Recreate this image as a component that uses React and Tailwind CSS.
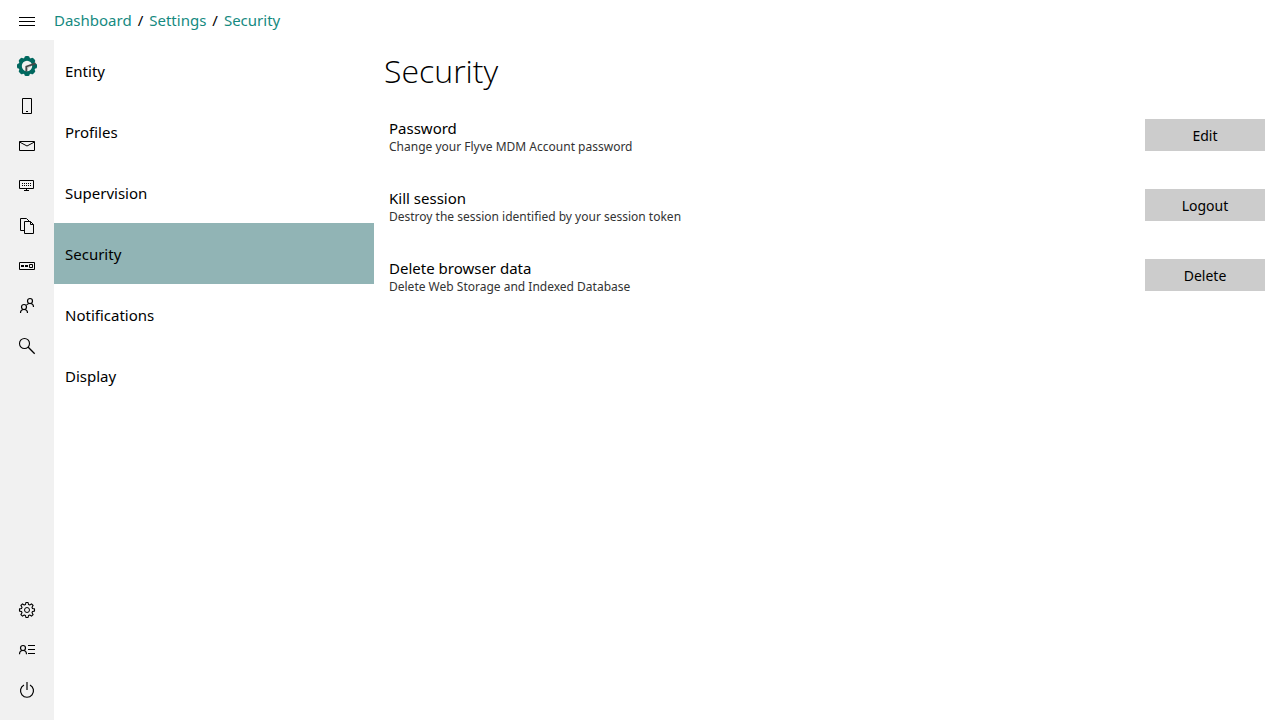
const TEETH = [0, 45, 90, 135, 180, 225, 270, 315];

const outline = { fill: 'none', stroke: 'currentColor', strokeWidth: 1 };

function Icon({ children }) {
  return (
    <svg viewBox="0 0 20 20" className="size-5" aria-hidden="true" {...outline}>
      {children}
    </svg>
  );
}

const icons = {
  menu: (
    <Icon>
      <path d="M2 7.5h16M2 11.5h16M2 15.5h16" />
    </Icon>
  ),
  logo: (
    <Icon>
      <g fill="#00685f" stroke="none">
        {TEETH.map((a) => (
          <rect key={a} x="7.4" y="0" width="5.2" height="4" rx="1.6" transform={`rotate(${a} 10 10)`} />
        ))}
      </g>
      <circle cx="10" cy="10" r="6.9" stroke="#00685f" strokeWidth="3.4" />
      <path d="M9.3 15.4V10.6L18.6 7.4" stroke="#474747" strokeWidth="1.8" />
      <path d="M10.6 14.6v-3.2l3-1" stroke="#aaa" strokeWidth="0.8" />
    </Icon>
  ),
  phone: (
    <Icon>
      <path d="M5.5 2.5h9v15h-9zM9 15.5h2" />
    </Icon>
  ),
  mail: (
    <Icon>
      <path d="M2.5 5.5h15v9h-15z" />
      <path d="M2.5 6l7.5 4 7.5-4" />
    </Icon>
  ),
  monitor: (
    <Icon>
      <path d="M2.5 4.5h14v8h-14zM9.5 13v2M7 14.5h5" />
      <path d="M5 7.5h9M5 9.5h9" strokeDasharray="1 1" />
    </Icon>
  ),
  files: (
    <Icon>
      <path d="M7 14.5H3.5v-12h6l2.5 2.5" />
      <path d="M7.5 5.5h6l3 3v9h-9z" />
      <path d="M13.5 5.5v3h3" />
    </Icon>
  ),
  fields: (
    <Icon>
      <path d="M2.5 6.5h15v7h-15z" />
      <path d="M4 10h3M8 10h3" strokeWidth="2" />
      <path d="M12.5 8.5h3v3h-3z" />
    </Icon>
  ),
  users: (
    <Icon>
      <circle cx="13" cy="5" r="2.5" strokeWidth="1.2" />
      <circle cx="7" cy="11" r="2.5" strokeWidth="1.2" />
      <path d="M3.5 17c0-2.1 1.2-3.5 3.5-3.5s3.5 1.4 3.5 3.5M9.6 8.8c.8-.9 1.8-1.3 3.4-1.3 2.3 0 3.5 1.4 3.5 3.5" strokeWidth="1.2" />
    </Icon>
  ),
  search: (
    <Icon>
      <circle cx="7.5" cy="7.5" r="5" strokeWidth="1.1" />
      <path d="M11 11l6.7 6.7" strokeWidth="1.3" />
    </Icon>
  ),
  gear: (
    <Icon>
      <path
        strokeLinejoin="round"
        strokeWidth="1.1"
        d="M8.9 2.5h2.2l.4 2 1.3.5 1.7-1.1 1.6 1.6L15 7.2l.5 1.3 2 .4v2.2l-2 .4-.5 1.3 1.1 1.7-1.6 1.6-1.7-1.1-1.3.5-.4 2H8.9l-.4-2-1.3-.5-1.7 1.1-1.6-1.6L5 12.8l-.5-1.3-2-.4V8.9l2-.4L5 7.2 3.9 5.5l1.6-1.6L7.2 5l1.3-.5z"
      />
      <circle cx="10" cy="10" r="2.5" />
    </Icon>
  ),
  account: (
    <Icon>
      <circle cx="6" cy="8" r="2.5" strokeWidth="1.2" />
      <path d="M2.5 14.2c0-2.3 1.2-3.7 3.5-3.7s3.5 1.4 3.5 3.7" strokeWidth="1.2" />
      <path d="M11 5.5h7M11 9.5h7M11 13.5h7" />
    </Icon>
  ),
  power: (
    <Icon>
      <path d="M7 5a6.5 6.5 0 1 0 6 0" strokeWidth="1.2" />
      <path d="M10 2v8" strokeWidth="1.2" />
    </Icon>
  ),
};

const mainNav = [
  ['logo', 'Dashboard'],
  ['phone', 'Devices'],
  ['mail', 'Invitations'],
  ['monitor', 'Fleets'],
  ['files', 'Files'],
  ['fields', 'Applications'],
  ['users', 'Users'],
  ['search', 'Search'],
];

const footerNav = [
  ['gear', 'Settings'],
  ['account', 'Account'],
  ['power', 'Log out'],
];

const sections = ['Entity', 'Profiles', 'Supervision', 'Security', 'Notifications', 'Display'];

const actions = [
  { title: 'Password', detail: 'Change your Flyve MDM Account password', button: 'Edit' },
  { title: 'Kill session', detail: 'Destroy the session identified by your session token', button: 'Logout' },
  { title: 'Delete browser data', detail: 'Delete Web Storage and Indexed Database', button: 'Delete' },
];

function NavGroup({ items }) {
  return (
    <ul>
      {items.map(([icon, label]) => (
        <li key={icon}>
          <a href="#" aria-label={label} className="flex h-10 items-center justify-center">
            {icons[icon]}
          </a>
        </li>
      ))}
    </ul>
  );
}

export default function App() {
  return (
    <div className="flex min-h-screen flex-col bg-white font-['Noto_Sans','Open_Sans',sans-serif] text-[15px] leading-5 text-black">
      <header className="flex h-10 items-center">
        <button type="button" aria-label="Menu" className="flex h-10 w-[54px] items-center justify-center">
          {icons.menu}
        </button>
        <nav aria-label="Breadcrumb" className="flex gap-1.5">
          <a href="#" className="text-[#158a7f]">Dashboard</a>
          <span>/</span>
          <a href="#" className="text-[#158a7f]">Settings</a>
          <span>/</span>
          <a href="#" className="text-[#158a7f]">Security</a>
        </nav>
      </header>
      <div className="flex flex-1">
        <nav aria-label="Main" className="flex w-[54px] shrink-0 flex-col justify-between bg-[#f1f1f1] pt-1.5 pb-2.5">
          <NavGroup items={mainNav} />
          <NavGroup items={footerNav} />
        </nav>
        <nav aria-label="Settings" className="w-80 shrink-0">
          {sections.map((name) => (
            <a
              key={name}
              href="#"
              className={`flex h-[61px] items-center px-[11px] ${name === 'Security' ? 'bg-[#91b4b5]' : ''}`}
            >
              {name}
            </a>
          ))}
        </nav>
        <main className="min-w-0 flex-1 pt-2 pr-[15px] pl-2.5">
          <h1 className="font-['Open_Sans','Noto_Sans',sans-serif] text-[32px] leading-[46px] font-light">Security</h1>
          <ul className="mt-6 flex flex-col gap-8 pl-[5px]">
            {actions.map((a) => (
              <li key={a.title} className="flex items-start justify-between gap-4">
                <div>
                  <h2 className="leading-5">{a.title}</h2>
                  <p className="text-xs leading-[18px] text-[#333]">{a.detail}</p>
                </div>
                <button type="button" className="mt-px h-8 w-[120px] shrink-0 bg-[#ccc] pt-px text-sm">
                  {a.button}
                </button>
              </li>
            ))}
          </ul>
        </main>
      </div>
    </div>
  );
}
